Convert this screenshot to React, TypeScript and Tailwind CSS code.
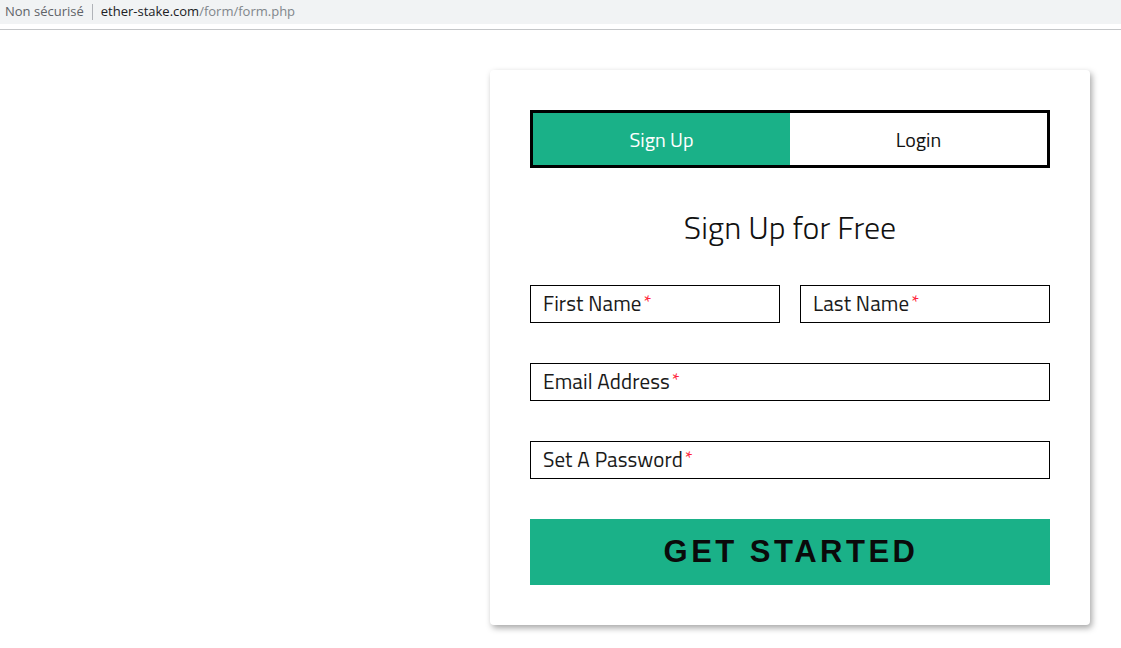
import React from "react";

const font = { fontFamily: "'Titillium Web', Roboto, 'Noto Sans', sans-serif" };

function Field({ label, className = "" }: { label: string; className?: string }) {
  return (
    <div className={`h-[38px] border border-black flex items-center pl-[12px] ${className}`}>
      <span className="text-[21px] text-[#1a1a1a] tracking-[0.1px]" style={font}>
        {label}
        <span className="text-[#ff1f3a] text-[19px] relative -top-[2px] ml-[2px]">*</span>
      </span>
    </div>
  );
}

export default function App() {
  return (
    <div className="w-[1121px] h-[648px] bg-white overflow-hidden relative">
      <div className="h-[24px] bg-[#f1f3f4] flex items-center pl-[5px] text-[13px]" style={{ fontFamily: "'Segoe UI', 'Open Sans', 'Noto Sans', sans-serif" }}>
        <span className="text-[#5f6368]">Non sécurisé</span>
        <span className="mx-[8px] h-[16px] w-px bg-[#b0b3b8]" />
        <span className="text-[#202124]">ether-stake.com</span>
        <span className="text-[#80868b]">/form/form.php</span>
      </div>
      <div className="h-[5px]" />
      <div className="h-px bg-[#c4c6c8]" />
      <div className="flex">
        <div className="w-[490px] shrink-0" />
        <div className="mt-[40px] w-[600px] h-[555px] bg-white rounded-[4px] shadow-[2px_3px_6px_rgba(0,0,0,0.35)] px-[40px] pt-[40px]">
          <div className="h-[58px] border-[3px] border-black flex">
            <div className="w-[257px] bg-[#1ab188] flex items-center justify-center text-white text-[20px] pt-[2px]" style={font}>
              Sign Up
            </div>
            <div className="flex-1 flex items-center justify-center text-[#111] text-[20px] pt-[2px]" style={font}>
              Login
            </div>
          </div>
          <div className="h-[117px] flex items-center justify-center text-[32px] text-[#111] font-light" style={font}>
            Sign Up for Free
          </div>
          <div className="flex gap-[20px]">
            <Field label="First Name" className="flex-1" />
            <Field label="Last Name" className="flex-1" />
          </div>
          <Field label="Email Address" className="mt-[40px]" />
          <Field label="Set A Password" className="mt-[40px]" />
          <div className="mt-[40px] h-[66px] bg-[#1ab188] flex items-center justify-center">
            <span className="text-[31px] font-bold tracking-[3.5px] text-[#0a0a0a] pl-[2px]" style={{ fontFamily: "'Liberation Sans', Arial, sans-serif" }}>
              GET STARTED
            </span>
          </div>
        </div>
      </div>
    </div>
  );
}
